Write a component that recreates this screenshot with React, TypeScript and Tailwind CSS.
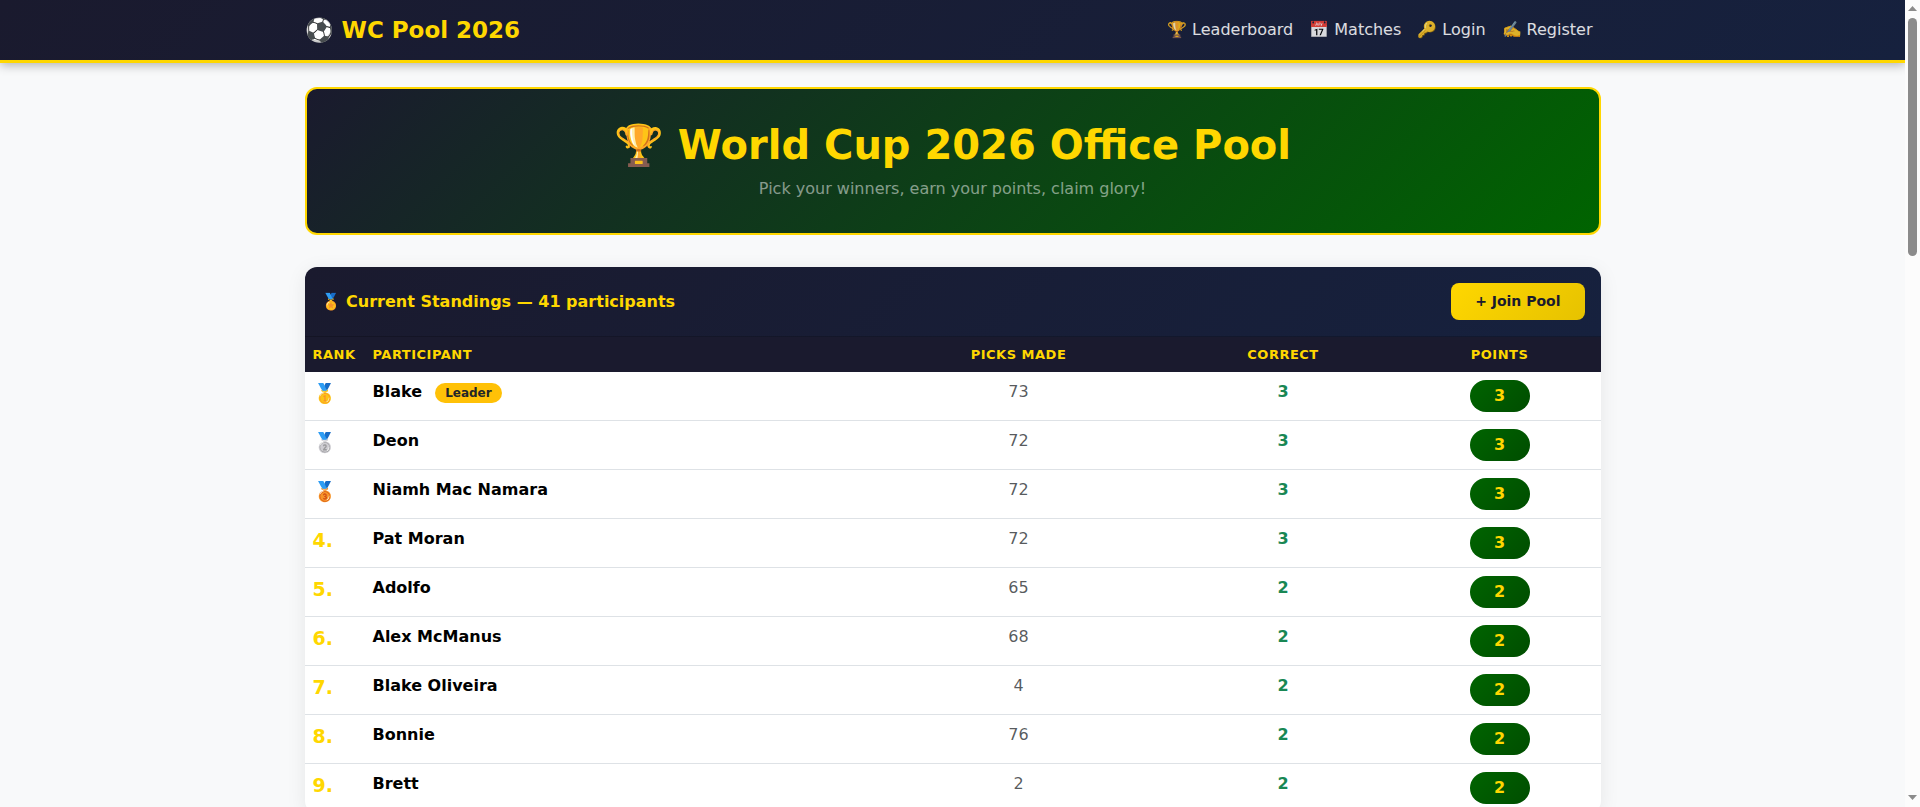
type Standing = {
  rank: string;
  name: string;
  picks: number;
  correct: number;
  points: number;
  leader?: boolean;
};

const standings: Standing[] = [
  { rank: "🥇", name: "Blake", picks: 73, correct: 3, points: 3, leader: true },
  { rank: "🥈", name: "Deon", picks: 72, correct: 3, points: 3 },
  { rank: "🥉", name: "Niamh Mac Namara", picks: 72, correct: 3, points: 3 },
  { rank: "4.", name: "Pat Moran", picks: 72, correct: 3, points: 3 },
  { rank: "5.", name: "Adolfo", picks: 65, correct: 2, points: 2 },
  { rank: "6.", name: "Alex McManus", picks: 68, correct: 2, points: 2 },
  { rank: "7.", name: "Blake Oliveira", picks: 4, correct: 2, points: 2 },
  { rank: "8.", name: "Bonnie", picks: 76, correct: 2, points: 2 },
  { rank: "9.", name: "Brett", picks: 2, correct: 2, points: 2 },
];

const links = ["🏆 Leaderboard", "📅 Matches", "🔑 Login", "✍️ Register"];

function Navbar() {
  return (
    <header className="relative border-b-3 border-[#ffd700] bg-linear-135/srgb from-[#1a1a2e] to-[#16213e] shadow-[0_2px_10px_rgba(0,0,0,0.3)]">
      <div className="mx-auto flex h-15 max-w-[1320px] items-center justify-between px-3">
        <a href="#" className="text-[23px] leading-8 font-bold text-[#ffd700]">
          ⚽ WC Pool 2026
        </a>
        <nav className="flex">
          {links.map((link) => (
            <a key={link} href="#" className="px-2 text-base text-white/85">
              {link}
            </a>
          ))}
        </nav>
      </div>
    </header>
  );
}

function Hero() {
  return (
    <section className="rounded-xl border-2 border-[#ffd700] bg-linear-135/srgb from-[#1a1a2e] to-[#006400] p-8 text-center">
      <h1 className="mb-2 text-[40px] leading-12 font-bold text-[#ffd700]">🏆 World Cup 2026 Office Pool</h1>
      <p className="text-base text-white/50">Pick your winners, earn your points, claim glory!</p>
    </section>
  );
}

function StandingsRow({ row }: { row: Standing }) {
  return (
    <tr className="border-b border-[#dee2e6] align-top">
      <td className="p-2 text-[19px] leading-[26px] font-bold text-[#ffd700]">{row.rank}</td>
      <td className="p-2 text-black">
        <strong>{row.name}</strong>{" "}
        {row.leader && (
          <span className="ml-2 inline-block rounded-full bg-[#ffc107] px-2.5 py-1 align-baseline text-xs leading-3 font-bold text-[#212529]">
            Leader
          </span>
        )}
      </td>
      <td className="p-2 text-center text-[#212529]/75">{row.picks}</td>
      <td className="p-2 text-center font-bold text-[#198754]">{row.correct}</td>
      <td className="p-2">
        <span className="mx-auto block w-15 rounded-full bg-linear-135/srgb from-[#006400] to-[#004d00] py-1 text-center font-bold text-[#ffd700]">
          {row.points}
        </span>
      </td>
    </tr>
  );
}

function Standings() {
  return (
    <section className="mt-8 overflow-hidden rounded-xl bg-white shadow-[0_4px_20px_rgba(0,0,0,0.08)]">
      <div className="flex items-center justify-between border-b border-black/20 bg-linear-135/srgb from-[#1a1a2e] to-[#16213e] p-4">
        <h2 className="text-base leading-[19px] font-bold text-[#ffd700]">🏅 Current Standings — 41 participants</h2>
        <button
          type="button"
          className="rounded-lg bg-linear-135/srgb from-[#ffd700] to-[#e6c200] px-6 py-2 text-sm leading-[21px] font-bold text-[#1a1a2e]"
        >
          + Join Pool
        </button>
      </div>
      <table className="w-full table-fixed border-collapse">
        <thead className="bg-[#1a1a2e] text-[13px] leading-[19px] tracking-[0.5px] text-[#ffd700] uppercase">
          <tr>
            <th className="w-15 p-2 text-left">Rank</th>
            <th className="p-2 text-left">Participant</th>
            <th className="w-[298px] p-2">Picks Made</th>
            <th className="w-[231px] p-2">Correct</th>
            <th className="w-[202px] p-2">Points</th>
          </tr>
        </thead>
        <tbody>
          {standings.map((row) => (
            <StandingsRow key={row.name} row={row} />
          ))}
        </tbody>
      </table>
    </section>
  );
}

function ScrollTrack() {
  return (
    <div className="flex w-[15px] shrink-0 flex-col items-center bg-[#fcfcfc] text-[#8b8b8b]" aria-hidden="true">
      <svg className="mt-1.5 mb-[7px] h-[5px] w-[9px]" viewBox="0 0 9 5" fill="currentColor">
        <path d="M4.5 0 9 5H0z" />
      </svg>
      <div className="h-[238px] w-[9px] rounded-full bg-[#8b8b8b]" />
      <svg className="mt-auto mb-[7px] h-[5px] w-[9px]" viewBox="0 0 9 5" fill="currentColor">
        <path d="M0 0h9L4.5 5z" />
      </svg>
    </div>
  );
}

export default function App() {
  return (
    <div className="flex h-screen overflow-hidden bg-[#f8f9fa] font-['DejaVu_Sans',sans-serif]">
      <div className="min-w-0 flex-1 overflow-hidden">
        <Navbar />
        <main className="mx-auto max-w-[1320px] px-3 pt-6">
          <Hero />
          <Standings />
        </main>
      </div>
      <ScrollTrack />
    </div>
  );
}
